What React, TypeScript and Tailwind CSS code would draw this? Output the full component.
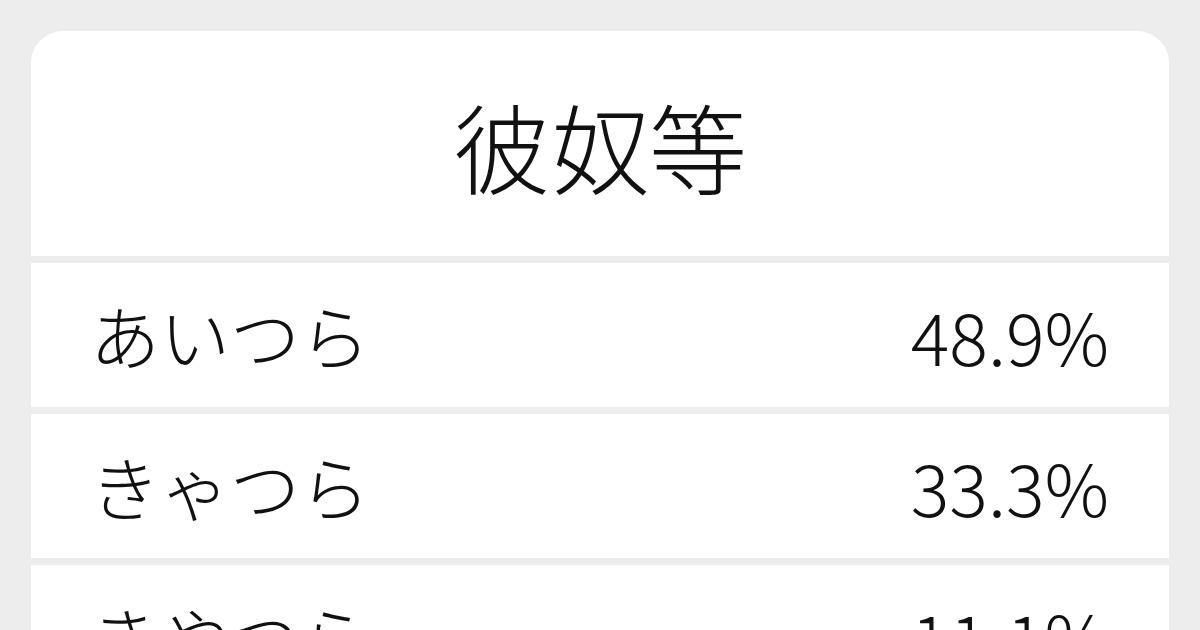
const rows = [
  { reading: 'あいつら', pct: '48.9%' },
  { reading: 'きゃつら', pct: '33.3%' },
  { reading: 'きやつら', pct: '11.1%' },
];

export default function App() {
  return (
    <div
      className="h-[630px] w-[1200px] overflow-hidden bg-[#ededed] px-[31px] pt-[31px] text-[#111111]"
      style={{ fontFamily: '"Noto Sans CJK JP", "Noto Sans", sans-serif' }}
    >
      <div className="flex flex-col gap-[7px]">
        <div className="flex h-[225px] items-center justify-center rounded-t-[32px] bg-white">
          <h1 className="text-[98px] font-light leading-none">彼奴等</h1>
        </div>
        {rows.map((r) => (
          <div
            key={r.reading}
            className="flex h-[144px] items-center justify-between bg-white pl-[59px] pr-[60px] font-light leading-none"
          >
            <span className="text-[70px]">{r.reading}</span>
            <span className="text-[72px]">{r.pct}</span>
          </div>
        ))}
      </div>
    </div>
  );
}
